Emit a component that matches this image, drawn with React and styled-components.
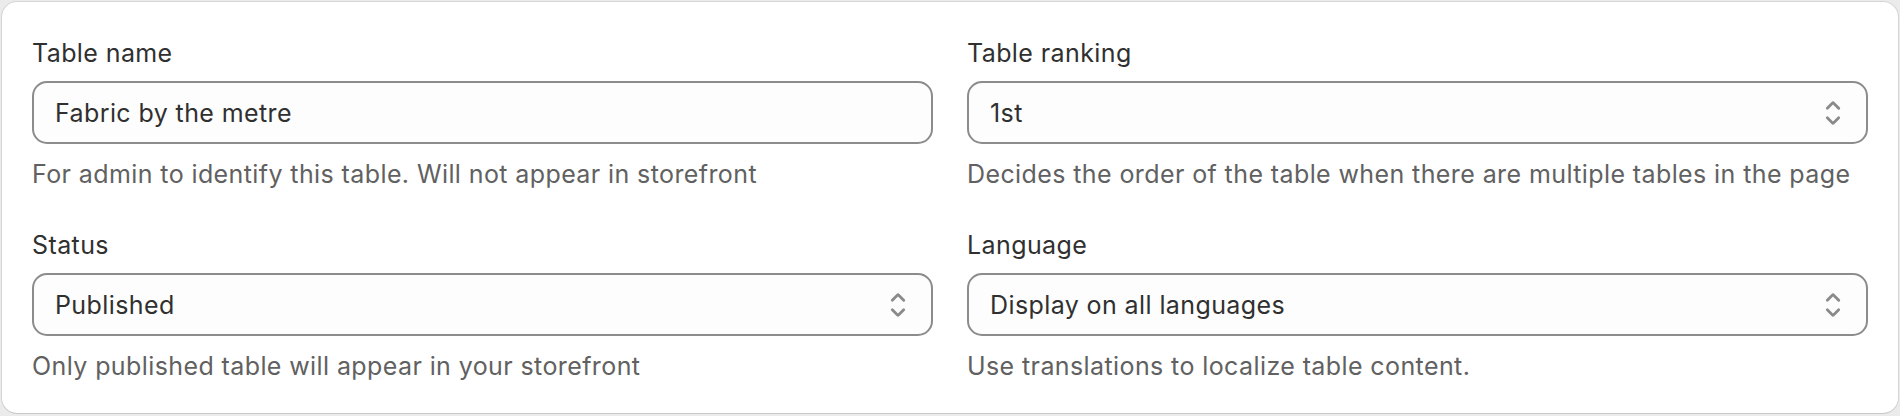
import React from "react";
import styled, { createGlobalStyle } from "styled-components";

const GlobalStyle = createGlobalStyle`
  html, body {
    margin: 0;
    padding: 0;
    background: #ebebeb;
  }
  body {
    font-family: Inter, "Noto Sans", "Liberation Sans", sans-serif;
    -webkit-font-smoothing: antialiased;
  }
`;

const Page = styled.div`
  padding: 2px 2px 3px;
`;

const Card = styled.section`
  background: #ffffff;
  border-radius: 15px;
  box-shadow: 0 0 0 1px rgba(0, 0, 0, 0.09), 0 1px 0 rgba(0, 0, 0, 0.06);
  padding: 35px 30px 31px;
`;

const Grid = styled.div`
  display: grid;
  grid-template-columns: 1fr 1fr;
  column-gap: 34px;
  row-gap: 39px;
`;

const Field = styled.div`
  display: flex;
  flex-direction: column;
  min-width: 0;
`;

const Label = styled.label`
  font-size: 25px;
  line-height: 32px;
  letter-spacing: 0.4px;
  color: #303030;
  margin-bottom: 12px;
`;

const boxStyles = `
  box-sizing: border-box;
  height: 63px;
  width: 100%;
  border: 2px solid #8c8c8c;
  border-radius: 15px;
  background: #fdfdfd;
  font-family: Inter, "Noto Sans", "Liberation Sans", sans-serif;
  font-size: 25px;
  line-height: 32px;
  letter-spacing: 0.4px;
  color: #303030;
`;

const TextInput = styled.input`
  ${boxStyles}
  padding: 0 21px;
  outline: none;
`;

const SelectBox = styled.div`
  ${boxStyles}
  display: flex;
  align-items: center;
  padding: 0 14px 0 21px;
  cursor: pointer;
`;

const SelectValue = styled.span`
  flex: 1;
`;

const Help = styled.p`
  margin: 14px 0 0;
  font-size: 25px;
  line-height: 32px;
  letter-spacing: 0.4px;
  color: #616161;
`;

const SelectIcon = () => (
  <svg width="38" height="38" viewBox="0 0 20 20" fill="#8a8a8a">
    <path d="M10.884 4.323a1.25 1.25 0 0 0-1.768 0l-2.646 2.647a.75.75 0 0 0 1.06 1.06l2.47-2.47 2.47 2.47a.75.75 0 1 0 1.06-1.06z" />
    <path d="m13.53 13.03-2.646 2.647a1.25 1.25 0 0 1-1.768 0L6.47 13.03a.75.75 0 0 1 1.06-1.06l2.47 2.47 2.47-2.47a.75.75 0 0 1 1.06 1.06" />
  </svg>
);

const Select = ({ value }) => (
  <SelectBox role="combobox">
    <SelectValue>{value}</SelectValue>
    <SelectIcon />
  </SelectBox>
);

export default function App() {
  return (
    <Page>
      <GlobalStyle />
      <Card>
        <Grid>
          <Field>
            <Label>Table name</Label>
            <TextInput defaultValue="Fabric by the metre" />
            <Help>For admin to identify this table. Will not appear in storefront</Help>
          </Field>
          <Field>
            <Label>Table ranking</Label>
            <Select value="1st" />
            <Help>Decides the order of the table when there are multiple tables in the page</Help>
          </Field>
          <Field>
            <Label>Status</Label>
            <Select value="Published" />
            <Help>Only published table will appear in your storefront</Help>
          </Field>
          <Field>
            <Label>Language</Label>
            <Select value="Display on all languages" />
            <Help>Use translations to localize table content.</Help>
          </Field>
        </Grid>
      </Card>
    </Page>
  );
}
